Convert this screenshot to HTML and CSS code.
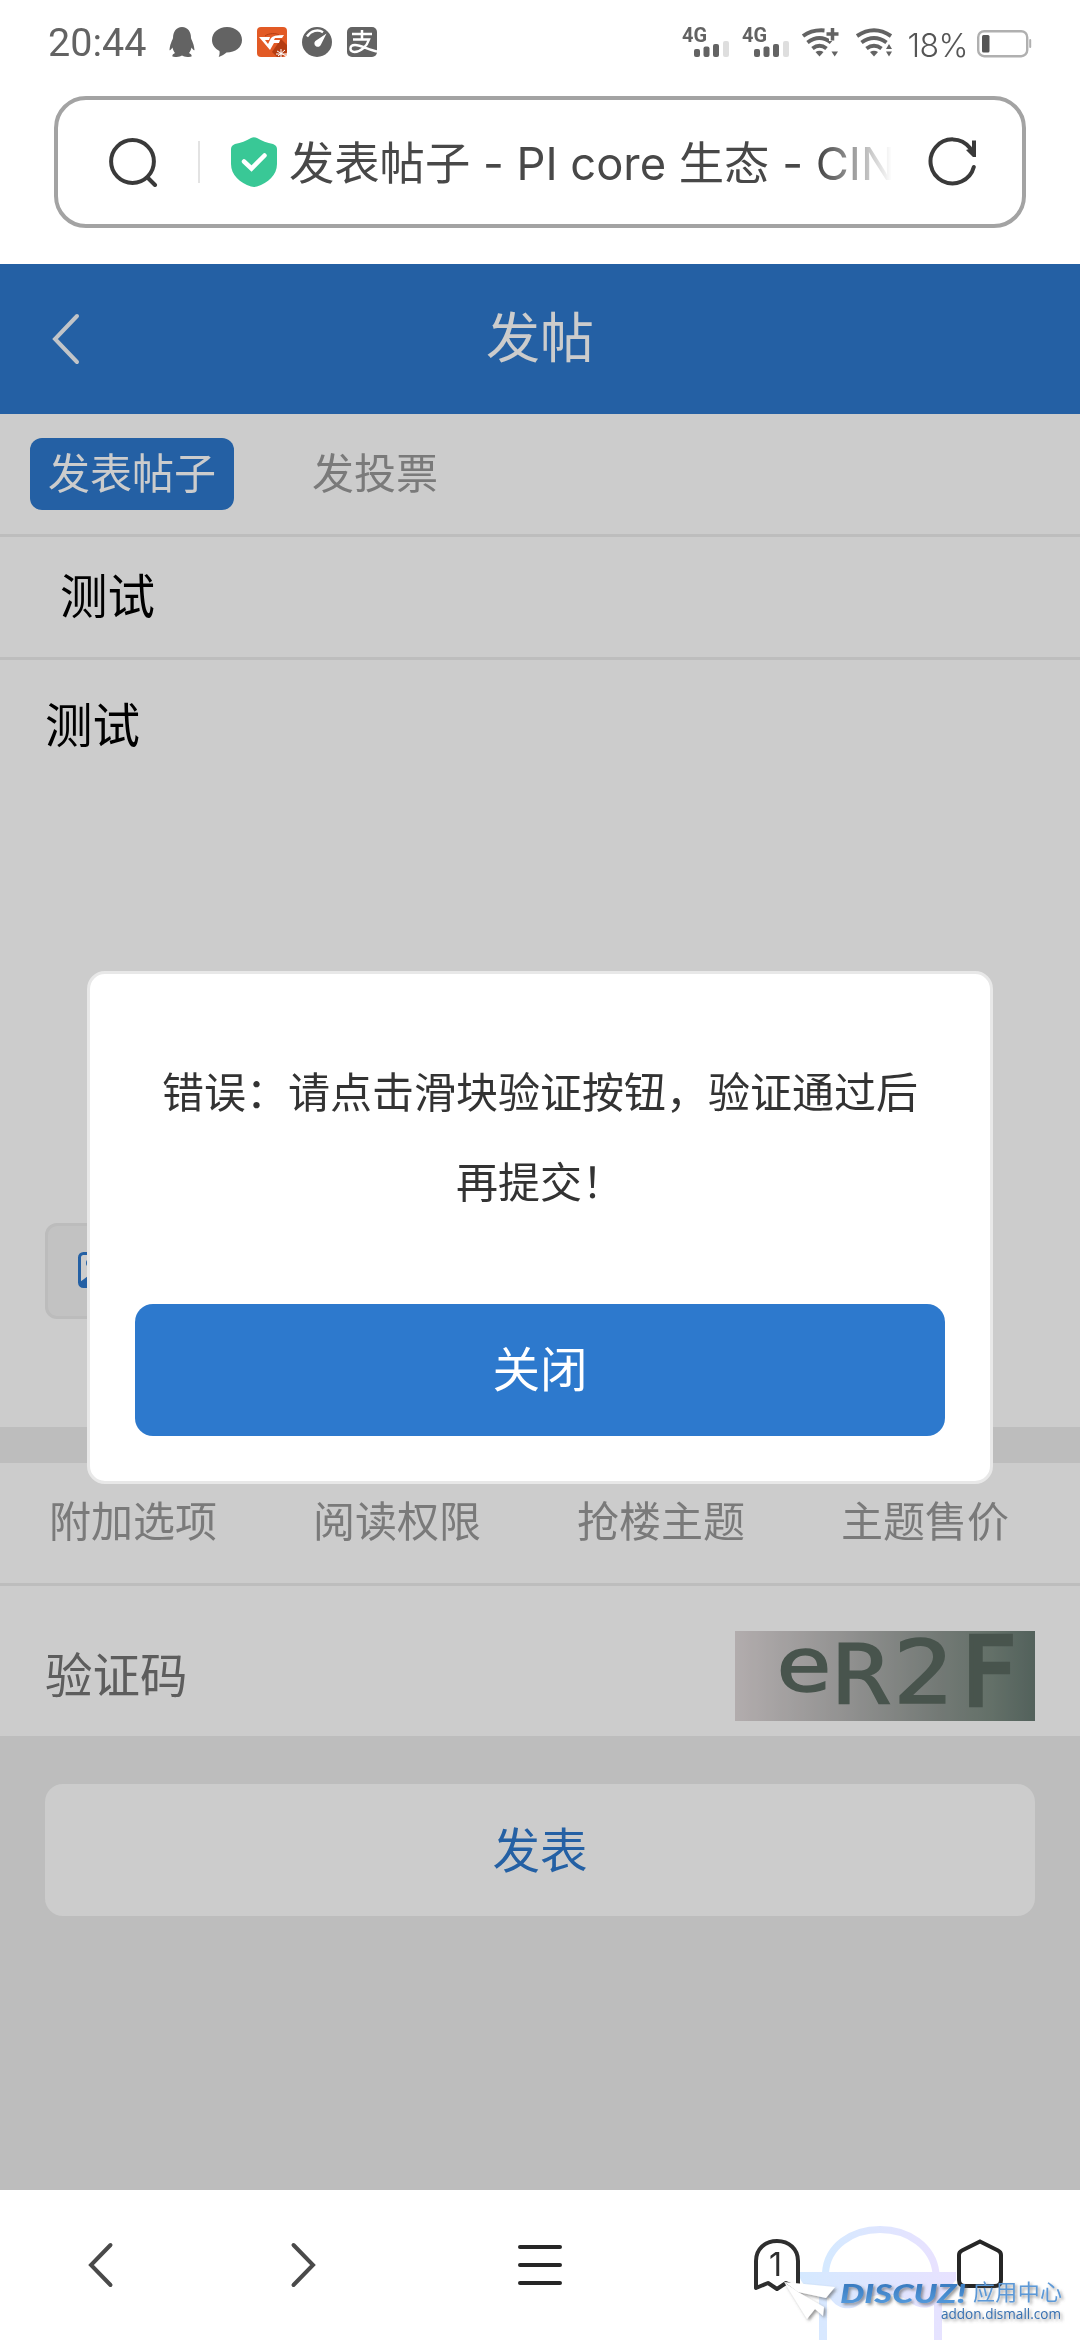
FILE: index.html
```html
<!DOCTYPE html>
<html lang="zh-CN">
<head>
<meta charset="utf-8">
<title>发表帖子</title>
<link rel="stylesheet" href="styles.css">
</head>
<body>
<div class="phone">
  <header class="status">
    <span class="clock">20:44</span>
    <div class="notices">
      <svg width="30" height="30" viewBox="0 0 30 30" fill="#636363"><path d="M15 0C9 0 6 5 6 11C5 14 3 17 2.500 23C3 24 4.500 22 5.500 20.500C6 23 7 25 8 26C6 27 5 28 5.500 29.500C8 30.500 13 30 15 28.500C17 30 22 30.500 24.500 29.500C25 28 24 27 22 26C23 25 24 23 24.500 20.500C25.500 22 27 24 27.500 23C27 17 25 14 24 11C24 5 21 0 15 0Z"/></svg>
      <svg width="30" height="30" viewBox="0 0 30 30" fill="#636363"><path d="M15 0C6.500 0 0 5.500 0 13C0 18 3 21.500 7.500 24C7.800 26.500 7.500 28 6.700 30C10 29 12.500 27 14.500 25.500C23.500 25.500 30 20.500 30 13C30 5.500 23.500 0 15 0Z"/></svg>
      <svg width="30" height="30" viewBox="0 0 30 30"><rect width="30" height="30" rx="4" fill="#e25a25"/><path d="M15 25L24 12L30 18V25L25 30H20Z" fill="#b53d12"/><path d="M8 9C12 6 19 6 22 8" fill="none" stroke="#b53d12"/><path d="M2 10H13L12 13H8L11 17L14 11Q16 8 27 8L25 11H18L17 13H23L22 16H17L13 23Z" fill="#fff"/><path d="M20 24L29 29M21 29L28 23M24 22V30M19 27H30" stroke="#fff" stroke-width="1"/></svg>
      <svg width="30" height="30" viewBox="0 0 30 30"><circle cx="15" cy="15" r="15" fill="#636363"/><path d="M5 9.500C9 3.500 16 2 21 5.200" fill="none" stroke="#fff" stroke-width="2.400"/><path d="M24.500 6.500L19 17.500A3.400 3.400 0 1 1 13.400 14Z" fill="#fff"/></svg>
      <svg width="30" height="30" viewBox="0 0 30 30"><rect width="30" height="30" rx="5" fill="#636363"/><path d="M5 7H25M15 3V12M6 12.500H22C20 19 14 25 7.500 25C2 25 2 18 8 18C14 18 22 23 30 24.500" fill="none" stroke="#fff" stroke-width="2.500"/></svg>
    </div>
    <div class="signals">
      <svg width="48" height="30" viewBox="0 0 48 30"><text x="0" y="15" class="net" textLength="25" lengthAdjust="spacingAndGlyphs">4G</text><g fill="#636363"><rect x="12" y="22" width="6" height="8" rx="2"/><rect x="21.500" y="19.500" width="6" height="10.500" rx="2"/><rect x="31" y="17" width="6" height="13" rx="2"/></g><rect x="41" y="14" width="6" height="16" rx="2" fill="#dedede"/></svg>
      <svg width="48" height="30" viewBox="0 0 48 30"><text x="0" y="15" class="net" textLength="25" lengthAdjust="spacingAndGlyphs">4G</text><g fill="#636363"><rect x="12" y="22" width="6" height="8" rx="2"/><rect x="21.500" y="19.500" width="6" height="10.500" rx="2"/><rect x="31" y="17" width="6" height="13" rx="2"/></g><rect x="41" y="14" width="6" height="16" rx="2" fill="#dedede"/></svg>
      <svg width="38" height="30" viewBox="0 0 38 30"><g fill="none" stroke="#636363" stroke-width="4"><path d="M1 9Q10 2.500 22.500 3.500"/><path d="M5.500 15.500Q17.500 6.500 29 15.500"/><path d="M10.500 21.500Q17.500 16 24.500 21.500"/></g><path d="M13.500 25Q17.500 22.500 21.500 25L17.500 29.500Z" fill="#636363"/><path d="M30 0V14M23.500 7H37" stroke="#fff" stroke-width="6"/><path d="M30.500 1V13.500M24.500 7H36.500" stroke="#636363" stroke-width="3.500"/><path d="M29.500 24.500H36L32.700 29.500Z" fill="#636363"/></svg>
      <svg width="38" height="30" viewBox="0 0 38 30"><g fill="none" stroke="#636363" stroke-width="4"><path d="M1 9Q18 -2.500 35 9"/><path d="M5.500 15.500Q18 6.500 30.500 15.500"/><path d="M10.500 21.500Q18 16 25.500 21.500"/></g><path d="M14 25Q18 22.500 22 25L18 29.500Z" fill="#636363"/><path d="M30 16.500H36V30H30Z" fill="#fff"/><path d="M30 22H36L33 17ZM30 24.500H36L33 29.500Z" fill="#636363"/></svg>
    </div>
    <span class="percent">18%</span>
    <svg class="battery" width="55" height="28" viewBox="0 0 55 28"><rect x="1.200" y="1.200" width="49" height="25" rx="6" fill="none" stroke="#b0b0b0" stroke-width="2.400"/><rect x="5" y="5" width="7.500" height="17.500" rx="1.500" fill="#555"/><rect x="52.200" y="9" width="2" height="9" rx="1" fill="#b0b0b0"/></svg>
  </header>

  <div class="address">
    <svg width="50" height="50" viewBox="0 0 50 50" fill="none" stroke="#3a3a3a" stroke-width="4" stroke-linecap="round"><circle cx="24.500" cy="24.500" r="21.400"/><path d="M39.500 40.500L47 48"/></svg>
    <i class="bar"></i>
    <svg class="shield" width="46" height="50" viewBox="0 0 46 50"><path d="M20 1Q23 -.3 26 1C31 4 36 6 42 7Q46 8.500 46 12V27C46 38 37 46 26 49.500Q23 50.300 20 49.500C9 46 0 38 0 27V12Q0 8.500 4 7C10 6 15 4 20 1Z" fill="#39c896"/><path d="M13 24.500L20.500 31.500L33.500 18.500" fill="none" stroke="#fff" stroke-width="4.500" stroke-linecap="round"/></svg>
    <div class="url">发表帖子 - PI core 生态 - CIN</div>
    <svg class="reload" width="50" height="50" viewBox="0 0 50 50"><path d="M45.800 30A22 22 0 1 1 42 11" fill="none" stroke="#3a3a3a" stroke-width="4" stroke-linecap="round"/><path d="M44 3.500H48V20H45L38 13L44 11Z" fill="#3a3a3a"/></svg>
  </div>

  <main class="page">
    <div class="topbar">
      <svg class="back" width="30" height="52" viewBox="0 0 30 52"><path d="M26 3L4 26L26 49" fill="none" stroke="#f2f6fa" stroke-width="4" stroke-linecap="round"/></svg>
      <h1>发帖</h1>
    </div>
    <nav class="tabs"><a class="on">发表帖子</a><a>发投票</a></nav>
    <div class="subject">测试</div>
    <section class="message">
      <p>测试</p>
      <div class="attach"><svg width="44" height="36" viewBox="0 0 44 36"><rect x="1.500" y="1.500" width="41" height="33" rx="4" fill="#fff" stroke="#2d79cd" stroke-width="3"/><circle cx="12" cy="11" r="4" fill="#2d79cd"/><path d="M2 30L14 21L24 27L42 14V34H2Z" fill="#2d79cd"/></svg></div>
    </section>
    <nav class="options"><a>附加选项</a><a>阅读权限</a><a>抢楼主题</a><a>主题售价</a></nav>
    <div class="verify">
      <span>验证码</span>
      <svg class="captcha" width="300" height="90" viewBox="0 0 300 90">
        <text transform="translate(41 60) scale(1 .93)" class="cap" textLength="56" lengthAdjust="spacingAndGlyphs">e</text>
        <text transform="translate(98 72) scale(1 1.020)" class="cap" textLength="56" lengthAdjust="spacingAndGlyphs">R</text>
        <text transform="translate(158 72) scale(1 1.100)" class="cap" textLength="60" lengthAdjust="spacingAndGlyphs">2</text>
        <text transform="translate(226 74) scale(1 1.180)" class="cap heavy" textLength="55" lengthAdjust="spacingAndGlyphs">F</text>
      </svg>
    </div>
    <div class="submit"><button>发表</button></div>
    <div class="mask">
      <div class="dialog">
        <p>错误：请点击滑块验证按钮，验证通过后再提交！</p>
        <button>关闭</button>
      </div>
    </div>
  </main>

  <footer class="toolbar">
    <svg width="26" height="46" viewBox="0 0 26 46"><path d="M22.500 3L3 23L22.500 43" fill="none" stroke="#4a4a4a" stroke-width="4" stroke-linecap="round"/></svg>
    <svg width="26" height="46" viewBox="0 0 26 46"><path d="M3.500 3L23 23L3.500 43" fill="none" stroke="#4a4a4a" stroke-width="4" stroke-linecap="round"/></svg>
    <svg width="44" height="40" viewBox="0 0 44 40"><path d="M2 2H42M2 20H42M2 38H42" stroke="#262626" stroke-width="4" stroke-linecap="round"/></svg>
    <svg width="46" height="52" viewBox="0 0 46 52"><path d="M2 49V22C2 10 11 2 23 2S44 10 44 22V49L32 44L23 50L14 44Z" fill="none" stroke="#2e2e2e" stroke-width="4" stroke-linejoin="round"/><text x="15" y="37" class="count">1</text></svg>
    <svg width="46" height="50" viewBox="0 0 46 50"><path d="M23 2.500L41 11.500Q44 13 44 16V41Q44 47 38 47H8Q2 47 2 41V16Q2 13 5 11.500Z" fill="none" stroke="#262626" stroke-width="4"/></svg>
    <svg class="watermark" width="320" height="130" viewBox="0 0 320 130">
      <defs>
        <linearGradient id="robot" x1="0" x2="1"><stop offset="0" stop-color="#d5e9ff"/><stop offset="1" stop-color="#e8e2ff"/></linearGradient>
        <linearGradient id="brand" x1="0" y1="0" x2="0" y2="1"><stop offset="0" stop-color="#2f6fb5"/><stop offset="1" stop-color="#5ba1e2"/></linearGradient>
        <filter id="shade" x="-20%" y="-20%" width="150%" height="160%"><feDropShadow dx="2" dy="2" stdDeviation="1.500" flood-color="#555" flood-opacity=".6"/></filter>
      </defs>
      <g class="robot"><path d="M45.500 63C47 36 72 19.500 100 19.500S153 36 156 63" fill="none" stroke="url(#robot)" stroke-width="7"/><path d="M19 62H176V70L160 88C154 100 139 100 130 92C118 82 92 82 82 92C74 101 58 101 50 88L28 78Q19 72 19 62ZM39 84H47V130H39ZM154 84H162V130H154Z" fill="url(#robot)"/></g>
      <g filter="url(#shade)"><path d="M4 72L55 77L46 88L18 82Z" fill="#fff"/><path d="M4 72L18 82L44 97L43 106L35 99L27 109Z" fill="#fff"/></g>
      <g filter="url(#shade)"><text x="60" y="93" class="brand" fill="url(#brand)" textLength="126" lengthAdjust="spacingAndGlyphs">DISCUZ!</text><text x="193" y="89.500" class="center" textLength="89">应用中心</text><text x="161" y="109" class="domain" textLength="120" lengthAdjust="spacingAndGlyphs">addon.dismall.com</text></g>
    </svg>
  </footer>
</div>
</body>
</html>
```
FILE: styles.css
```css
* { box-sizing: border-box; }
body { margin: 0; background: #fff; font-family: "Noto Sans CJK SC", sans-serif; }
h1, p { margin: 0; font-weight: 400; }
button { border: 0; font: inherit; padding: 0; }
svg { display: block; flex: none; }
.phone { width: 1080px; height: 2340px; display: flex; flex-direction: column; overflow: hidden; }

.status { height: 96px; padding: 27px 48px 0 48px; display: flex; align-items: flex-start; flex: none; }
.clock { width: 120px; font: 39.5px/32px Roboto, sans-serif; color: #636363; }
.notices { display: flex; gap: 15px; }
.signals { display: flex; margin-left: 305px; }
.signals svg { margin-right: 12px; overflow: visible; }
.signals svg:nth-child(3) { margin-right: 16px; }
.signals svg:nth-child(4) { margin-right: 13px; }
.net { font: bold 20px Roboto, sans-serif; fill: #636363; }
.percent { width: 70px; font: 300 32px/38px Inter, sans-serif; letter-spacing: -.5px; color: #555; }
.battery { margin-top: 3px; }

.address { height: 132px; margin: 0 54px 36px; padding: 0 44px 0 50px; border: 4px solid #a3a3a3; border-radius: 32px; display: flex; align-items: center; flex: none; }
.bar { width: 2px; height: 42px; margin: 0 31px 0 40px; background: #e3e3e3; }
.url { width: 603px; margin: 0 36px 0 12px; padding-top: 3px; overflow: hidden; white-space: nowrap; font: 45.3px/60px Inter, "Noto Sans CJK SC", sans-serif; color: #484848;
  -webkit-mask-image: linear-gradient(90deg, #000 88%, transparent 100%); mask-image: linear-gradient(90deg, #000 88%, transparent 100%); }

.page { height: 1926px; position: relative; background: #ededed; flex: none; }
.topbar { height: 150px; padding: 0 51px; display: grid; grid-template-columns: 30px 1fr 30px; align-items: center; background: #2d79cd; color: #fff; }
.topbar h1 { text-align: center; font-size: 54px; line-height: 80px; padding-bottom: 9px; }
.tabs { height: 123px; padding: 24px 30px 0; display: flex; gap: 60px; background: #fff; border-bottom: 3px solid #ededed; font-size: 42px; line-height: 65px; color: #999; }
.tabs a { height: 72px; padding: 0 18px; border-radius: 12px; }
.tabs .on { background: #2d79cd; color: #fff; }
.subject { height: 123px; padding: 21px 60px; background: #fff; border-bottom: 3px solid #ededed; font-size: 47.5px; line-height: 72px; color: #000; }
.message { height: 767px; padding: 27px 45px 0; display: flex; flex-direction: column; background: #fff; font-size: 47.5px; line-height: 72px; }
.attach { width: 280px; height: 96px; margin-top: 464px; padding: 26px 30px; border: 3px solid #ebebeb; border-radius: 12px; background: #f3f3f3; }
.options { height: 123px; margin-top: 36px; padding: 0 49px; display: flex; gap: 96px; background: #fff; border-bottom: 3px solid #ededed; font-size: 42px; line-height: 112px; color: #999; }
.options a { flex: none; }
.verify { height: 150px; padding: 45px 45px 0; display: flex; align-items: flex-start; justify-content: space-between; background: #fff; font-size: 47.5px; line-height: 84px; color: #757575; }
.captcha { background: linear-gradient(90deg, #dfd8d9, #b5b5b4 38%, #909893 68%, #7d8d83 85%, #687a73); }
.cap { font: 80px "DejaVu Sans Mono", monospace; fill: #5b6a61; stroke: #5b6a61; stroke-width: 1.5px; }
.heavy { stroke-width: 4px; }
.submit { padding: 48px 45px; }
.submit button { width: 100%; height: 132px; padding-bottom: 6px; border-radius: 18px; background: #fff; color: #2d79cd; font-size: 47.5px; }

.mask { position: absolute; inset: 0; display: flex; align-items: center; justify-content: center; background: rgba(0, 0, 0, .2); }
.dialog { width: 906px; height: 513px; padding: 71px 45px 45px; border: 3px solid #e8e8e8; border-radius: 18px; background: #fff; display: flex; flex-direction: column; justify-content: space-between; }
.dialog p { width: 756px; margin: 0 auto; text-align: center; font-size: 42px; line-height: 90px; color: #333; }
.dialog button { height: 132px; padding-bottom: 6px; border-radius: 18px; background: #2d79cd; color: #fff; font-size: 47.5px; }

.toolbar { height: 150px; position: relative; padding: 0 78px 0 88px; display: flex; align-items: center; background: #fff; }
.toolbar > svg:nth-child(2) { margin-left: 176px; }
.toolbar > svg:nth-child(3) { margin-left: 202px; }
.toolbar > svg:nth-child(4) { margin-left: 192px; }
.toolbar > svg:nth-child(5) { margin-left: 157px; margin-bottom: 2px; }
.count { font: 32px Inter, sans-serif; fill: #2e2e2e; }
.watermark { position: absolute; left: 780px; bottom: 0; }
.robot { mix-blend-mode: multiply; }
.brand { font: italic 900 27px Lato, sans-serif; }
.center { font: 22px "Noto Sans CJK SC", sans-serif; fill: #5b98d6; }
.domain { font: 15px "Open Sans", sans-serif; fill: #3670b0; }
```
